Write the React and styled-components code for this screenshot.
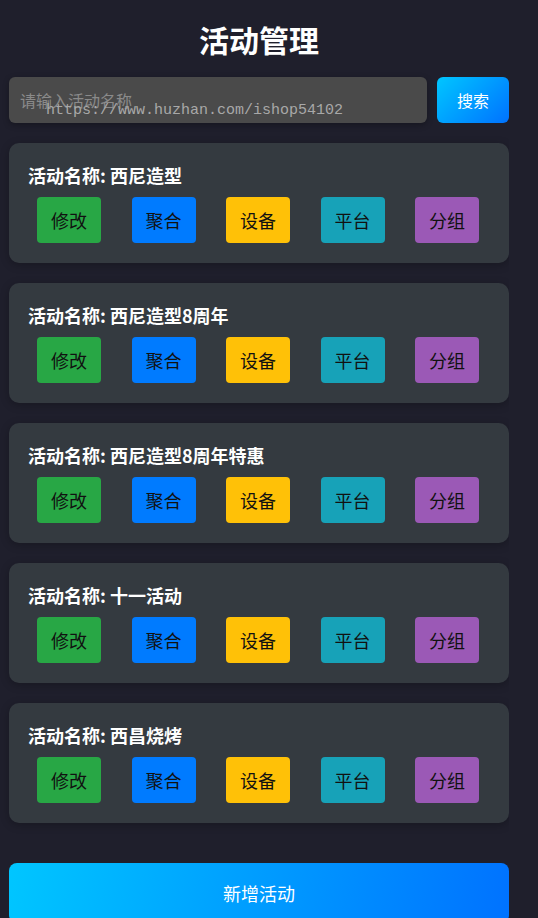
import React from 'react';
import styled, { createGlobalStyle } from 'styled-components';

const GlobalStyle = createGlobalStyle`
	html, body {
		margin: 0;
		padding: 0;
		background: #1f1f2c;
		font-family: 'Noto Sans CJK SC', 'Noto Sans', sans-serif;
	}
`;

const Page = styled.div`
	width: 500px;
	padding: 0 0 0 9px;
	height: 918px;
	overflow: hidden;
`;

const Title = styled.h1`
	margin: 0;
	padding-top: 19px;
	height: 77px;
	box-sizing: border-box;
	font-size: 30px;
	line-height: 40px;
	font-weight: bold;
	color: #fff;
	text-align: center;
`;

const SearchRow = styled.div`
	display: flex;
	gap: 10px;
	margin-bottom: 20px;
`;

const InputWrap = styled.div`
	position: relative;
	flex: 1;
`;

const Input = styled.input`
	width: 100%;
	box-sizing: border-box;
	height: 46px;
	border: none;
	border-radius: 6px;
	background: #4a4a4a;
	box-shadow: 0 2px 6px rgba(0, 0, 0, 0.3);
	padding: 0 11px;
	font-family: inherit;
	font-size: 16px;
	color: #fff;
	outline: none;
	&::placeholder {
		color: #8a8a8a;
	}
`;

const Watermark = styled.span`
	position: absolute;
	left: 37px;
	top: 25px;
	font-family: 'Liberation Mono', monospace;
	font-size: 15px;
	line-height: 18px;
	color: #a8a8a8;
	pointer-events: none;
	white-space: nowrap;
`;

const SearchButton = styled.button`
	width: 72px;
	height: 46px;
	border: none;
	border-radius: 6px;
	background: linear-gradient(135deg, #00c6ff, #0072ff);
	color: #fff;
	font-family: inherit;
	font-size: 16px;
`;

const Card = styled.div`
	background: #343a40;
	border-radius: 10px;
	padding: 20px 20px 20px 19px;
	height: 120px;
	box-sizing: border-box;
	margin-bottom: 20px;
	box-shadow: 0 2px 8px rgba(0, 0, 0, 0.25);
`;

const CardTitle = styled.div`
	color: #fff;
	font-size: 18px;
	font-weight: bold;
	line-height: 24px;
	margin-bottom: 10px;
`;

const Actions = styled.div`
	display: flex;
	gap: 30.5px;
	padding-left: 9px;
`;

const Action = styled.button`
	width: 64px;
	height: 46px;
	border: none;
	border-radius: 4px;
	background: ${(p) => p.color};
	color: #111;
	font-family: inherit;
	font-size: 18px;
	padding: 0;
`;

const AddButton = styled.button`
	display: block;
	width: 500px;
	height: 60px;
	margin-top: 40px;
	border: none;
	border-radius: 8px;
	background: linear-gradient(100deg, #00c6ff, #0072ff);
	color: #fff;
	font-family: inherit;
	font-size: 18px;
	padding-bottom: 2px;
`;

const actions = [
	{ label: '修改', color: '#28a745' },
	{ label: '聚合', color: '#007bff' },
	{ label: '设备', color: '#ffc107' },
	{ label: '平台', color: '#17a2b8' },
	{ label: '分组', color: '#9b59b6' },
];

const activities = ['西尼造型', '西尼造型8周年', '西尼造型8周年特惠', '十一活动', '西昌烧烤'];

const App = () => {
	return (
		<>
			<GlobalStyle />
			<Page>
				<Title>活动管理</Title>
				<SearchRow>
					<InputWrap>
						<Input placeholder="请输入活动名称" />
						<Watermark>https://www.huzhan.com/ishop54102</Watermark>
					</InputWrap>
					<SearchButton>搜索</SearchButton>
				</SearchRow>
				{activities.map((name) => (
					<Card key={name}>
						<CardTitle>活动名称: {name}</CardTitle>
						<Actions>
							{actions.map((a) => (
								<Action key={a.label} color={a.color}>
									{a.label}
								</Action>
							))}
						</Actions>
					</Card>
				))}
				<AddButton>新增活动</AddButton>
			</Page>
		</>
	);
};

export default App;
